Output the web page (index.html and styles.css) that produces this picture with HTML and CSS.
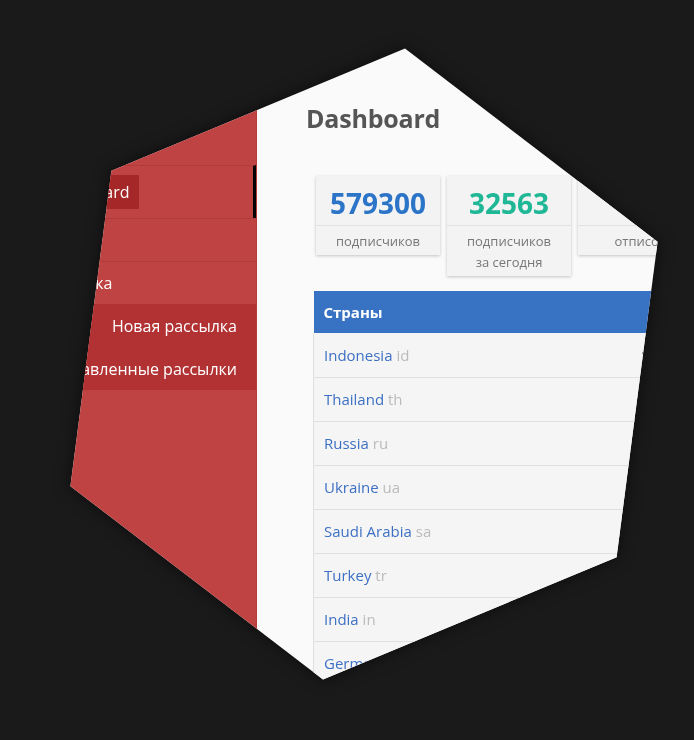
FILE: index.html
```html
<!DOCTYPE html>
<html lang="ru">
<head>
<meta charset="utf-8">
<title>Dashboard</title>
<link rel="stylesheet" href="styles.css">
</head>
<body>
<div class="hex-shadow">
  <div class="hex">
    <aside class="sidebar">
      <div class="logo">Mailer</div>
      <ul class="menu">
        <li class="item active"><span class="pill">Dashboard</span></li>
        <li class="item">Базы</li>
        <li class="item">Рассылка</li>
        <li class="sub">Новая рассылка</li>
        <li class="sub">Отправленные рассылки</li>
      </ul>
    </aside>
    <main class="main">
      <h1 class="title">Dashboard</h1>
      <div class="cards">
        <div class="card">
          <div class="num blue">579300</div>
          <div class="label">подписчиков</div>
        </div>
        <div class="card">
          <div class="num teal">32563</div>
          <div class="label">подписчиков<br>за сегодня</div>
        </div>
        <div class="card">
          <div class="num red">84</div>
          <div class="label">отписок</div>
        </div>
      </div>
      <table class="countries">
        <thead>
          <tr><th class="c-name">Страны</th><th class="c-val"></th></tr>
        </thead>
        <tbody>
          <tr><td><span class="cn">Indonesia</span> <span class="cc">id</span></td><td class="v">1842</td></tr>
          <tr><td><span class="cn">Thailand</span> <span class="cc">th</span></td><td class="v">963</td></tr>
          <tr><td><span class="cn">Russia</span> <span class="cc">ru</span></td><td class="v">812</td></tr>
          <tr><td><span class="cn">Ukraine</span> <span class="cc">ua</span></td><td class="v">541</td></tr>
          <tr><td><span class="cn">Saudi Arabia</span> <span class="cc">sa</span></td><td class="v">403</td></tr>
          <tr><td><span class="cn">Turkey</span> <span class="cc">tr</span></td><td class="v">338</td></tr>
          <tr><td><span class="cn">India</span> <span class="cc">in</span></td><td class="v">295</td></tr>
          <tr><td><span class="cn">Germany</span> <span class="cc">de</span></td><td class="v">210</td></tr>
        </tbody>
      </table>
    </main>
  </div>
</div>
</body>
</html>
```
FILE: styles.css
```css
* { box-sizing: border-box; }
html, body {
  margin: 0;
  padding: 0;
  background: #1a1a1a;
  height: 740px;
  overflow: hidden;
}
body {
  font-family: "Open Sans", "Noto Sans", "DejaVu Sans", sans-serif;
}
.hex-shadow {
  width: 694px;
  height: 740px;
  filter: drop-shadow(0 0 8px rgba(0,0,0,0.55));
}
.hex {
  width: 694px;
  height: 740px;
  display: flex;
  background: #fafafa;
  overflow: hidden;
  clip-path: polygon(405px 48.6px, 657.6px 241.8px, 616.6px 557.2px, 323px 679.4px, 70.4px 486.2px, 111.4px 170.8px);
}
.sidebar {
  width: 257px;
  flex: none;
  background: #c04343;
  border-right: 1px solid #b63c3c;
  color: #fff;
  font-size: 16px;
}
.logo {
  height: 165px;
  padding: 60px 0 0 45px;
  color: #c04343;
}
.menu {
  list-style: none;
  margin: 0;
  padding: 0;
}
.item {
  border-top: 1px solid #b13b3b;
  height: 43px;
  padding-left: 40px;
  display: flex;
  align-items: center;
  line-height: 22px;
}
.item.active {
  height: 53px;
  padding-left: 38px;
  border-right: 3px solid #000;
}
.pill {
  background: #a52727;
  padding: 6px 9px;
  line-height: 22px;
}
.sub {
  background: #b23234;
  height: 43px;
  padding-right: 19px;
  display: flex;
  align-items: center;
  justify-content: flex-end;
  line-height: 22px;
}
.main {
  flex: 1;
  padding: 100px 0 0 49px;
  min-width: 0;
}
.title {
  margin: 0;
  font-size: 25px;
  line-height: 36px;
  font-weight: 700;
  letter-spacing: -0.2px;
  color: #555;
}
.cards {
  display: flex;
  align-items: flex-start;
  gap: 7px;
  margin: 40px 0 0 10px;
}
.card {
  width: 124px;
  flex: none;
  background: #f3f3f3;
  box-shadow: 0 1px 3px rgba(0,0,0,0.22);
  text-align: center;
}
.num {
  height: 50px;
  line-height: 55px;
  font-size: 28px;
  font-weight: 700;
  border-bottom: 1px solid #e2e2e2;
}
.blue { color: #2b74c8; }
.teal { color: #1fb796; }
.red { color: #d9534f; }
.label {
  font-size: 13px;
  color: #777;
  line-height: 21px;
  padding: 5px 0 3px;
}
.countries {
  margin: 15px 0 0 7px;
  width: 378px;
  border-collapse: collapse;
  font-size: 15px;
}
.countries th {
  background: #3873c3;
  color: #fff;
  font-weight: 700;
  height: 42px;
  text-align: left;
  padding: 0 10px;
}
.countries td {
  height: 44px;
  padding: 0 10px;
  background: #f5f5f5;
  border-bottom: 1px solid #e0e0e0;
  white-space: nowrap;
}
.countries tr td:first-child {
  border-left: 1px solid #e0e0e0;
}
.c-name { width: 317px; }
.cn { color: #3d70c4; }
.cc { color: #bbb; }
.v { color: #555; }
```
